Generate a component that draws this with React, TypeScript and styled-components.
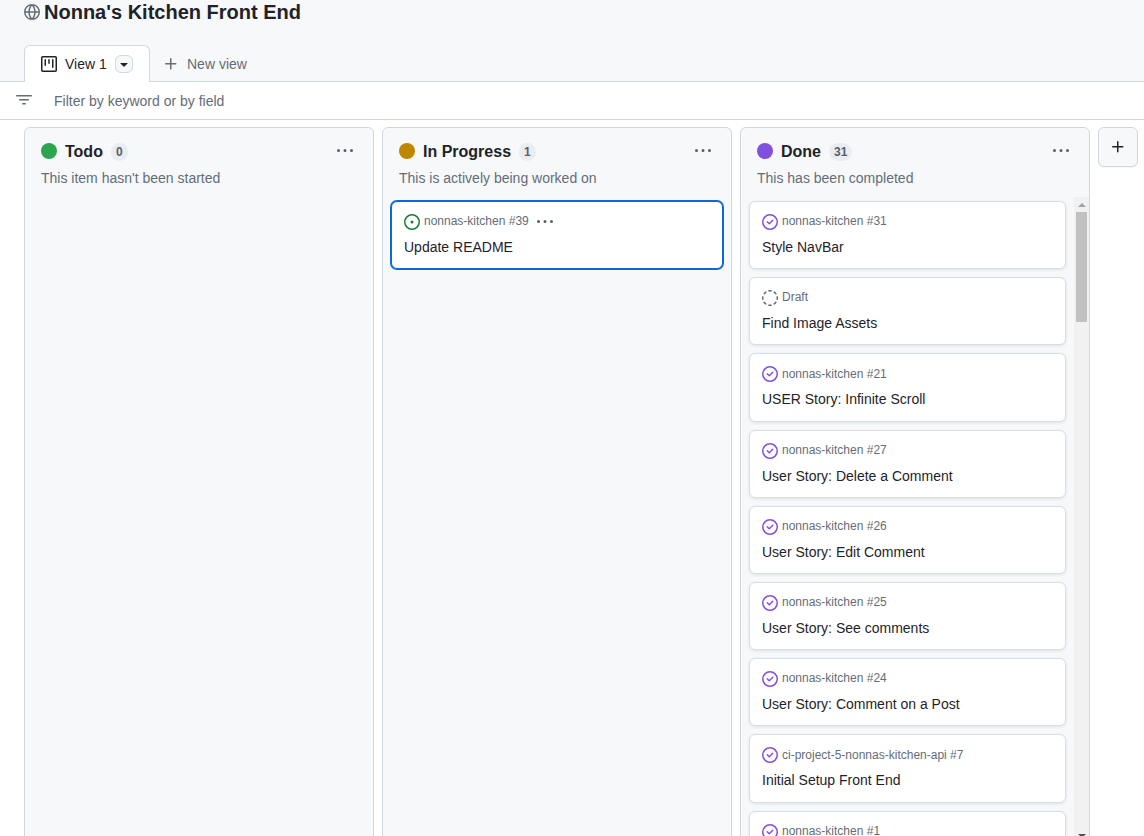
import React from "react";
import styled, { createGlobalStyle } from "styled-components";

const PATHS: Record<string, string> = {
  globe:
    "M8 0a8 8 0 1 1 0 16A8 8 0 0 1 8 0ZM5.78 8.75a9.64 9.64 0 0 0 1.363 4.177c.255.426.542.832.857 1.215.245-.296.551-.705.857-1.215A9.64 9.64 0 0 0 10.22 8.75Zm4.44-1.5a9.64 9.64 0 0 0-1.363-4.177c-.307-.51-.612-.919-.857-1.215a9.927 9.927 0 0 0-.857 1.215A9.64 9.64 0 0 0 5.78 7.25Zm-5.944 1.5H1.543a6.507 6.507 0 0 0 4.666 5.5c-.123-.181-.24-.365-.352-.552-.715-1.192-1.437-2.874-1.581-4.948Zm-2.733-1.5h2.733c.144-2.074.866-3.756 1.58-4.948.12-.197.237-.381.353-.552a6.507 6.507 0 0 0-4.666 5.5Zm10.181 1.5c-.144 2.074-.866 3.756-1.58 4.948-.12.197-.237.381-.353.552a6.507 6.507 0 0 0 4.666-5.5Zm2.733-1.5a6.507 6.507 0 0 0-4.666-5.5c.123.181.24.365.353.552.714 1.192 1.436 2.874 1.58 4.948Z",
  project:
    "M1.75 0h12.5C15.216 0 16 .784 16 1.75v12.5A1.75 1.75 0 0 1 14.25 16H1.75A1.75 1.75 0 0 1 0 14.25V1.75C0 .784.784 0 1.75 0ZM1.5 1.75v12.5c0 .138.112.25.25.25h12.5a.25.25 0 0 0 .25-.25V1.75a.25.25 0 0 0-.25-.25H1.75a.25.25 0 0 0-.25.25ZM11.75 3a.75.75 0 0 1 .75.75v7.5a.75.75 0 0 1-1.5 0v-7.5a.75.75 0 0 1 .75-.75Zm-8.25.75a.75.75 0 0 1 1.5 0v5.5a.75.75 0 0 1-1.5 0ZM8 3a.75.75 0 0 1 .75.75v3.5a.75.75 0 0 1-1.5 0v-3.5A.75.75 0 0 1 8 3Z",
  plus: "M7.75 2a.75.75 0 0 1 .75.75V7h4.25a.75.75 0 0 1 0 1.5H8.5v4.25a.75.75 0 0 1-1.5 0V8.5H2.75a.75.75 0 0 1 0-1.5H7V2.75A.75.75 0 0 1 7.75 2Z",
  kebab:
    "M8 9a1.5 1.5 0 1 0 0-3 1.5 1.5 0 0 0 0 3ZM1.5 9a1.5 1.5 0 1 0 0-3 1.5 1.5 0 0 0 0 3Zm13 0a1.5 1.5 0 1 0 0-3 1.5 1.5 0 0 0 0 3Z",
  triangle:
    "m4.427 7.427 3.396 3.396a.25.25 0 0 0 .354 0l3.396-3.396A.25.25 0 0 0 11.396 7H4.604a.25.25 0 0 0-.177.427Z",
  filter:
    "M.75 3h14.5a.75.75 0 0 1 0 1.5H.75a.75.75 0 0 1 0-1.5ZM3 7.75A.75.75 0 0 1 3.75 7h8.5a.75.75 0 0 1 0 1.5h-8.5A.75.75 0 0 1 3 7.75Zm3 4a.75.75 0 0 1 .75-.75h2.5a.75.75 0 0 1 0 1.5h-2.5a.75.75 0 0 1-.75-.75Z",
  open: "M8 9.5a1.5 1.5 0 1 0 0-3 1.5 1.5 0 0 0 0 3ZM8 0a8 8 0 1 1 0 16A8 8 0 0 1 8 0ZM1.5 8a6.5 6.5 0 1 0 13 0 6.5 6.5 0 0 0-13 0Z",
  closed:
    "M11.28 6.78a.75.75 0 0 0-1.06-1.06L7.25 8.69 5.78 7.22a.75.75 0 0 0-1.06 1.06l2 2a.75.75 0 0 0 1.06 0l3.5-3.5ZM16 8A8 8 0 1 1 0 8a8 8 0 0 1 16 0Zm-1.5 0a6.5 6.5 0 1 0-13 0 6.5 6.5 0 0 0 13 0Z",
  draft:
    "M14.307 11.655a.75.75 0 0 1 .165 1.048 8.05 8.05 0 0 1-1.769 1.77.75.75 0 0 1-.883-1.213 6.51 6.51 0 0 0 1.44-1.44.75.75 0 0 1 1.047-.165Zm-2.652-9.962a.75.75 0 0 1 1.048-.165 8.05 8.05 0 0 1 1.77 1.769.75.75 0 0 1-1.213.883 6.51 6.51 0 0 0-1.44-1.44.75.75 0 0 1-.165-1.047ZM6.749.097a8.074 8.074 0 0 1 2.502 0 .75.75 0 1 1-.233 1.482 6.558 6.558 0 0 0-2.036 0A.751.751 0 0 1 6.749.097ZM.955 6.125a.75.75 0 0 1 .624.857 6.558 6.558 0 0 0 0 2.036.75.75 0 1 1-1.482.233 8.074 8.074 0 0 1 0-2.502.75.75 0 0 1 .858-.624Zm14.09 0a.75.75 0 0 1 .858.624 8.074 8.074 0 0 1 0 2.502.75.75 0 1 1-1.482-.233 6.558 6.558 0 0 0 0-2.036.75.75 0 0 1 .624-.857Zm-8.92 8.92a.75.75 0 0 1 .857-.624 6.558 6.558 0 0 0 2.036 0 .75.75 0 1 1 .233 1.482 8.074 8.074 0 0 1-2.502 0 .75.75 0 0 1-.624-.858Zm-4.432-3.39a.75.75 0 0 1 1.048.165 6.51 6.51 0 0 0 1.44 1.44.75.75 0 0 1-.883 1.212 8.05 8.05 0 0 1-1.77-1.769.75.75 0 0 1 .165-1.048Zm2.652-9.962A.75.75 0 0 1 4.34 2.74a6.51 6.51 0 0 0-1.44 1.44.751.751 0 0 1-1.212-.883 8.05 8.05 0 0 1 1.769-1.77.75.75 0 0 1 1.048.166Z",
};

const GlobalStyle = createGlobalStyle`
  html, body {
    margin: 0;
    height: 100%;
    overflow: hidden;
    background: #fff;
    font-family: "Liberation Sans", Arial, sans-serif;
    color: #1f2328;
  }
`;

const IconSvg = styled.svg<{ $color: string }>`
  display: block;
  flex: none;
  fill: ${(p) => p.$color};
`;

const Icon = ({ name, color = "#656d76", size = 16 }: { name: string; color?: string; size?: number }) => (
  <IconSvg $color={color} width={size} height={size} viewBox="0 0 16 16">
    <path d={PATHS[name]} />
  </IconSvg>
);

const Page = styled.div`
  height: 836px;
  overflow: hidden;
`;

const Header = styled.header`
  height: 81px;
  box-sizing: content-box;
  background: #f6f8fa;
  border-bottom: 1px solid #d0d7de;
  padding-left: 24px;
  display: flex;
  flex-direction: column;
`;

const TitleRow = styled.div`
  display: flex;
  align-items: center;
  gap: 4px;
  height: 24px;
`;

const Title = styled.h1`
  margin: 0;
  font-size: 20px;
  line-height: 24px;
  font-weight: 700;
`;

const Tabs = styled.div`
  display: flex;
  margin-top: 21px;
  height: 37px;
`;

const ActiveTab = styled.div`
  width: 126px;
  box-sizing: border-box;
  height: 37px;
  background: #fff;
  border: 1px solid #d0d7de;
  border-bottom: none;
  border-radius: 6px 6px 0 0;
  padding-left: 16px;
  display: flex;
  align-items: center;
  font-size: 14px;
  gap: 8px;
`;

const TabMenu = styled.span`
  width: 18px;
  height: 18px;
  box-sizing: border-box;
  border: 1px solid #d0d7de;
  border-radius: 6px;
  background: #f6f8fa;
  display: flex;
  align-items: center;
  justify-content: center;
`;

const NewView = styled.div`
  display: flex;
  align-items: center;
  gap: 8px;
  padding-left: 13px;
  font-size: 14px;
  color: #656d76;
`;

const FilterBar = styled.div`
  height: 37px;
  background: #fff;
  border-bottom: 1px solid #d0d7de;
  display: flex;
  align-items: center;
  padding-left: 16px;
  gap: 22px;
  font-size: 14px;
  color: #656d76;
`;

const FilterIcon = styled.span`
  margin-bottom: 2px;
`;

const Board = styled.main`
  display: flex;
  align-items: flex-start;
  gap: 8px;
  padding: 7px 0 0 24px;
`;

const Column = styled.section`
  width: 350px;
  height: 725px;
  box-sizing: border-box;
  flex: none;
  background: #f6f8fa;
  border: 1px solid #d0d7de;
  border-radius: 6px;
  display: flex;
  flex-direction: column;
`;

const ColumnHead = styled.div`
  display: flex;
  align-items: center;
  height: 16px;
  margin: 15px 20px 0 16px;
`;

const Dot = styled.span<{ $color: string }>`
  width: 16px;
  height: 16px;
  border-radius: 50%;
  background: ${(p) => p.$color};
  margin-right: 8px;
  flex: none;
`;

const ColumnName = styled.span`
  font-size: 16px;
  font-weight: 700;
  line-height: 18px;
  margin-top: 2px;
  margin-right: 8px;
`;

const Count = styled.span`
  height: 18px;
  padding: 0 5px;
  margin-top: 1px;
  border-radius: 9px;
  background: #e9edf1;
  font-size: 12px;
  font-weight: 700;
  line-height: 18px;
  color: #57606a;
  flex: none;
`;

const HeadMenu = styled.span`
  margin-left: auto;
`;

const Description = styled.p`
  margin: 9px 16px 9px;
  font-size: 14px;
  line-height: 20px;
  color: #656d76;
`;

const ColumnBody = styled.div`
  flex: 1;
  min-height: 0;
  margin-bottom: 8px;
  display: flex;
`;

const CardList = styled.div`
  flex: 1;
  min-width: 0;
  overflow: hidden;
  padding: 4px 8px 0;
  display: flex;
  flex-direction: column;
  gap: 8px;
`;

const Card = styled.article<{ $selected?: boolean }>`
  flex: none;
  background: #fff;
  border: 1px solid ${(p) => (p.$selected ? "#0969da" : "#d8dee4")};
  border-radius: 6px;
  padding: 12px 12px 11px;
  box-shadow: ${(p) => (p.$selected ? "0 0 0 1px #0969da" : "0 1px 3px rgba(140, 149, 159, 0.2)")};
`;

const CardMeta = styled.div`
  display: flex;
  align-items: center;
  height: 16px;
  font-size: 12px;
  color: #656d76;
  margin-bottom: 7px;
  gap: 4px;
`;

const RepoLabel = styled.span`
  padding-bottom: 1.6px;
`;

const CardMenu = styled.span`
  margin-left: 4px;
`;

const CardTitle = styled.div`
  font-size: 14px;
  line-height: 20.2px;
  min-height: 20.2px;
`;

const ScrollBar = styled.div`
  width: 15px;
  flex: none;
  background: #f1f1f1;
  display: flex;
  flex-direction: column;
  align-items: center;
`;

const ScrollArrow = styled.span<{ $down?: boolean }>`
  height: 15px;
  flex: none;
  display: flex;
  align-items: center;
  justify-content: center;

  &::before {
    content: "";
    border-left: 4px solid transparent;
    border-right: 4px solid transparent;
    ${(p) => (p.$down ? "border-top: 4px solid #505050;" : "border-bottom: 4px solid #a3a3a3;")}
  }
`;

const ScrollTrack = styled.div`
  flex: 1;
  align-self: stretch;
`;

const ScrollThumb = styled.div`
  height: 110px;
  margin: 0 2px;
  background: #c1c1c1;
`;

const AddColumn = styled.button`
  width: 40px;
  height: 40px;
  flex: none;
  padding: 0;
  background: #f6f8fa;
  border: 1px solid #d0d7de;
  border-radius: 6px;
  box-shadow: 0 1px 0 rgba(31, 35, 40, 0.04);
  display: flex;
  align-items: center;
  justify-content: center;
`;

interface Item {
  repo: string;
  title: string;
  kind: "open" | "closed" | "draft";
}

const STATE_COLORS = { open: "#1a7f37", closed: "#8250df", draft: "#656d76" };

const DONE_ITEMS: Item[] = [
  { repo: "nonnas-kitchen #31", title: "Style NavBar", kind: "closed" },
  { repo: "Draft", title: "Find Image Assets", kind: "draft" },
  { repo: "nonnas-kitchen #21", title: "USER Story: Infinite Scroll", kind: "closed" },
  { repo: "nonnas-kitchen #27", title: "User Story: Delete a Comment", kind: "closed" },
  { repo: "nonnas-kitchen #26", title: "User Story: Edit Comment", kind: "closed" },
  { repo: "nonnas-kitchen #25", title: "User Story: See comments", kind: "closed" },
  { repo: "nonnas-kitchen #24", title: "User Story: Comment on a Post", kind: "closed" },
  { repo: "ci-project-5-nonnas-kitchen-api #7", title: "Initial Setup Front End", kind: "closed" },
  { repo: "nonnas-kitchen #1", title: "", kind: "closed" },
];

const ItemCard = ({ item, selected }: { item: Item; selected?: boolean }) => (
  <Card $selected={selected}>
    <CardMeta>
      <Icon name={item.kind} color={STATE_COLORS[item.kind]} />
      <RepoLabel>{item.repo}</RepoLabel>
      {selected && (
        <CardMenu>
          <Icon name="kebab" color="#57606a" />
        </CardMenu>
      )}
    </CardMeta>
    <CardTitle>{item.title}</CardTitle>
  </Card>
);

interface ColumnProps {
  name: string;
  count: number;
  color: string;
  description: string;
  children?: React.ReactNode;
}

const BoardColumn = ({ name, count, color, description, children }: ColumnProps) => (
  <Column>
    <ColumnHead>
      <Dot $color={color} />
      <ColumnName>{name}</ColumnName>
      <Count>{count}</Count>
      <HeadMenu>
        <Icon name="kebab" color="#57606a" />
      </HeadMenu>
    </ColumnHead>
    <Description>{description}</Description>
    <ColumnBody>{children}</ColumnBody>
  </Column>
);

const App = () => (
  <Page>
    <GlobalStyle />
    <Header>
      <TitleRow>
        <Icon name="globe" />
        <Title>Nonna's Kitchen Front End</Title>
      </TitleRow>
      <Tabs>
        <ActiveTab>
          <Icon name="project" color="#1f2328" />
          View 1
          <TabMenu>
            <Icon name="triangle" color="#1f2328" />
          </TabMenu>
        </ActiveTab>
        <NewView>
          <Icon name="plus" />
          New view
        </NewView>
      </Tabs>
    </Header>
    <FilterBar>
      <FilterIcon>
        <Icon name="filter" />
      </FilterIcon>
      Filter by keyword or by field
    </FilterBar>
    <Board>
      <BoardColumn name="Todo" count={0} color="#2da44e" description="This item hasn't been started" />
      <BoardColumn name="In Progress" count={1} color="#bf8700" description="This is actively being worked on">
        <CardList>
          <ItemCard selected item={{ repo: "nonnas-kitchen #39", title: "Update README", kind: "open" }} />
        </CardList>
      </BoardColumn>
      <BoardColumn name="Done" count={31} color="#8250df" description="This has been completed">
        <CardList>
          {DONE_ITEMS.map((item) => (
            <ItemCard key={item.repo} item={item} />
          ))}
        </CardList>
        <ScrollBar>
          <ScrollArrow />
          <ScrollTrack>
            <ScrollThumb />
          </ScrollTrack>
          <ScrollArrow $down />
        </ScrollBar>
      </BoardColumn>
      <AddColumn aria-label="Add column">
        <Icon name="plus" color="#1f2328" />
      </AddColumn>
    </Board>
  </Page>
);

export default App;
